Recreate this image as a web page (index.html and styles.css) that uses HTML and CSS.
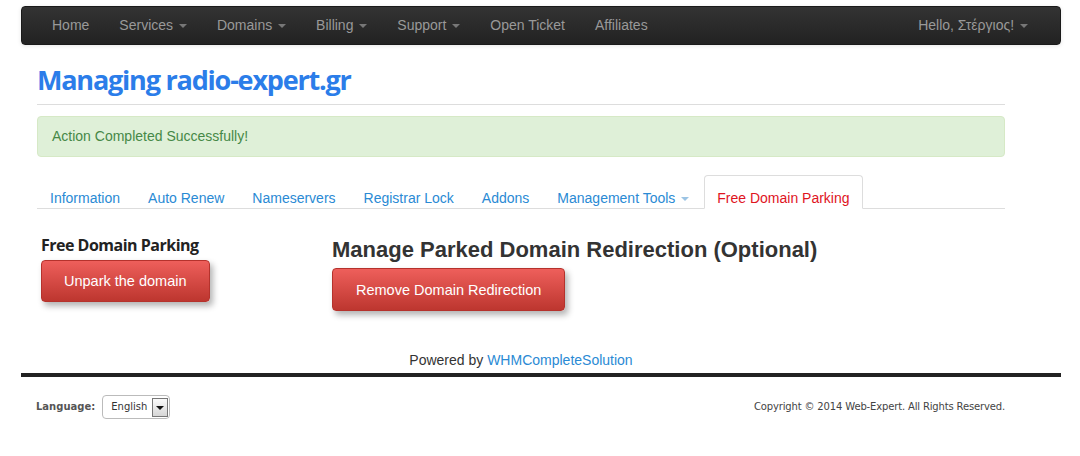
FILE: index.html
```html
<!DOCTYPE html>
<html lang="en">
<head>
    <meta charset="UTF-8">
    <title>Managing radio-expert.gr</title>
    <link rel="stylesheet" href="styles.css">
</head>
<body>
    <div class="page">
        <div class="navbar">
            <ul class="nav">
                <li><a href="#">Home</a></li>
                <li><a href="#">Services <b class="caret"></b></a></li>
                <li><a href="#">Domains <b class="caret"></b></a></li>
                <li><a href="#">Billing <b class="caret"></b></a></li>
                <li><a href="#">Support <b class="caret"></b></a></li>
                <li><a href="#">Open Ticket</a></li>
                <li><a href="#">Affiliates</a></li>
            </ul>
            <ul class="nav nav-right">
                <li><a href="#">Hello, Στέργιος! <b class="caret"></b></a></li>
            </ul>
        </div>

        <div class="content">
            <div class="page-header">
                <h1>Managing radio-expert.gr</h1>
            </div>

            <div class="alert-success">Action Completed Successfully!</div>

            <ul class="tabs">
                <li><a href="#">Information</a></li>
                <li><a href="#">Auto Renew</a></li>
                <li><a href="#">Nameservers</a></li>
                <li><a href="#">Registrar Lock</a></li>
                <li><a href="#">Addons</a></li>
                <li><a href="#">Management Tools <b class="caret caret-light"></b></a></li>
                <li class="active"><a href="#">Free Domain Parking</a></li>
            </ul>

            <div class="parking">
                <div class="parking-left">
                    <h3>Free Domain Parking</h3>
                    <a class="btn-danger" href="#">Unpark the domain</a>
                </div>
                <div class="parking-right">
                    <h2>Manage Parked Domain Redirection (Optional)</h2>
                    <a class="btn-danger btn-wide" href="#">Remove Domain Redirection</a>
                </div>
            </div>

            <p class="powered">Powered by <a href="#">WHMCompleteSolution</a></p>
        </div>

        <div class="footer">
            <div class="lang">
                <span class="lang-label">Language:</span>
                <span class="select">
                    <span class="select-text">English</span>
                    <span class="select-arrow"></span>
                </span>
            </div>
            <div class="copyright">Copyright © 2014 Web-Expert. All Rights Reserved.</div>
        </div>
    </div>
</body>
</html>
```

FILE: styles.css
```css
* {
    margin: 0;
    padding: 0;
    box-sizing: border-box;
}

body {
    font-family: "Liberation Sans", Arial, sans-serif;
    font-size: 14px;
    line-height: 20px;
    color: #333;
    background: white;
}

a {
    text-decoration: none;
}

ul {
    list-style: none;
}

.page {
    width: 1040px;
    margin-left: 21px;
}

/* top navigation */
.navbar {
    margin-top: 6px;
    height: 39px;
    display: flex;
    justify-content: space-between;
    padding: 0 17px 0 15px;
    background: linear-gradient(#333333, #222222);
    border: 1px solid #1a1a1a;
    border-radius: 4px;
    box-shadow: 0 1px 4px rgba(0,0,0,0.1);
}

.nav {
    display: flex;
}

.nav a {
    display: block;
    padding: 8px 15px 9px;
    color: #999;
}

.caret {
    display: inline-block;
    width: 0;
    height: 0;
    margin-left: 2px;
    vertical-align: middle;
    border-top: 4px solid #777;
    border-left: 4px solid transparent;
    border-right: 4px solid transparent;
}

.caret-light {
    border-top-color: #9cc4e4;
}

/* main content */
.content {
    padding: 0 56px 0 16px;
}

.page-header {
    padding: 17px 0 6px;
    border-bottom: 1px solid #ddd;
}

.page-header h1 {
    font-family: "Open Sans", sans-serif;
    font-size: 27px;
    line-height: 36px;
    font-weight: 700;
    letter-spacing: -1.2px;
    color: #2b7de9;
}

.alert-success {
    margin-top: 11px;
    padding: 9px 14px 10px;
    background: #dff0d8;
    border: 1px solid #d6e9c6;
    border-radius: 4px;
    color: #468847;
}

.tabs {
    display: flex;
    margin-top: 18px;
    border-bottom: 1px solid #ddd;
}

.tabs li {
    margin-right: 2px;
    margin-bottom: -1px;
}

.tabs a {
    display: block;
    padding: 12px 12px 0;
    border: 1px solid transparent;
    border-radius: 4px 4px 0 0;
    color: #2a8ad4;
}

.tabs .active a {
    color: #e0141e;
    background: white;
    border-color: #ddd;
    border-bottom-color: white;
}

.parking {
    display: flex;
    margin-top: 25px;
    padding-left: 4px;
}

.parking-left {
    width: 291px;
}

.parking-left h3 {
    font-family: "Open Sans", sans-serif;
    font-size: 16px;
    line-height: 22px;
    font-weight: 700;
    letter-spacing: -0.5px;
    color: #222;
    margin-bottom: 4px;
}

.parking-right h2 {
    font-size: 22px;
    line-height: 26px;
    font-weight: bold;
    color: #333;
    margin-top: 3px;
    margin-bottom: 5px;
}

.btn-danger {
    display: inline-block;
    padding: 10px 22px;
    font-size: 14.5px;
    color: white;
    background: linear-gradient(#ee5f5b, #bd362f);
    border: 1px solid #b5322c;
    border-radius: 4px;
    box-shadow: 3px 4px 6px rgba(0,0,0,0.3);
}

.btn-wide {
    padding: 11px 23px 10px;
}

.powered {
    margin-top: 39px;
    text-align: center;
    color: #333;
}

.powered a {
    color: #2a8ad4;
}

/* footer */
.footer {
    margin-top: 3px;
    border-top: 4px solid #222;
    display: flex;
    justify-content: space-between;
    align-items: center;
    padding: 18px 56px 0 15px;
    font-family: "DejaVu Sans", Tahoma, sans-serif;
    font-size: 10px;
    color: #555;
}

.lang {
    display: flex;
    align-items: center;
}

.lang-label {
    font-weight: bold;
    margin-right: 7px;
}

.select {
    display: inline-flex;
    align-items: center;
    height: 24px;
    border: 1px solid #bbb;
    border-radius: 4px;
    padding: 2px 1px 2px 8px;
}

.select-text {
    color: #333;
    margin-right: 5px;
}

.select-arrow {
    position: relative;
    width: 16px;
    height: 19px;
    border: 1px solid #777;
    background: linear-gradient(#fafafa, #d6d6d6);
}

.select-arrow::after {
    content: "";
    position: absolute;
    left: 3px;
    top: 7px;
    border-top: 4px solid #111;
    border-left: 4px solid transparent;
    border-right: 4px solid transparent;
}

.copyright {
    color: #444;
    letter-spacing: -0.15px;
}
```
